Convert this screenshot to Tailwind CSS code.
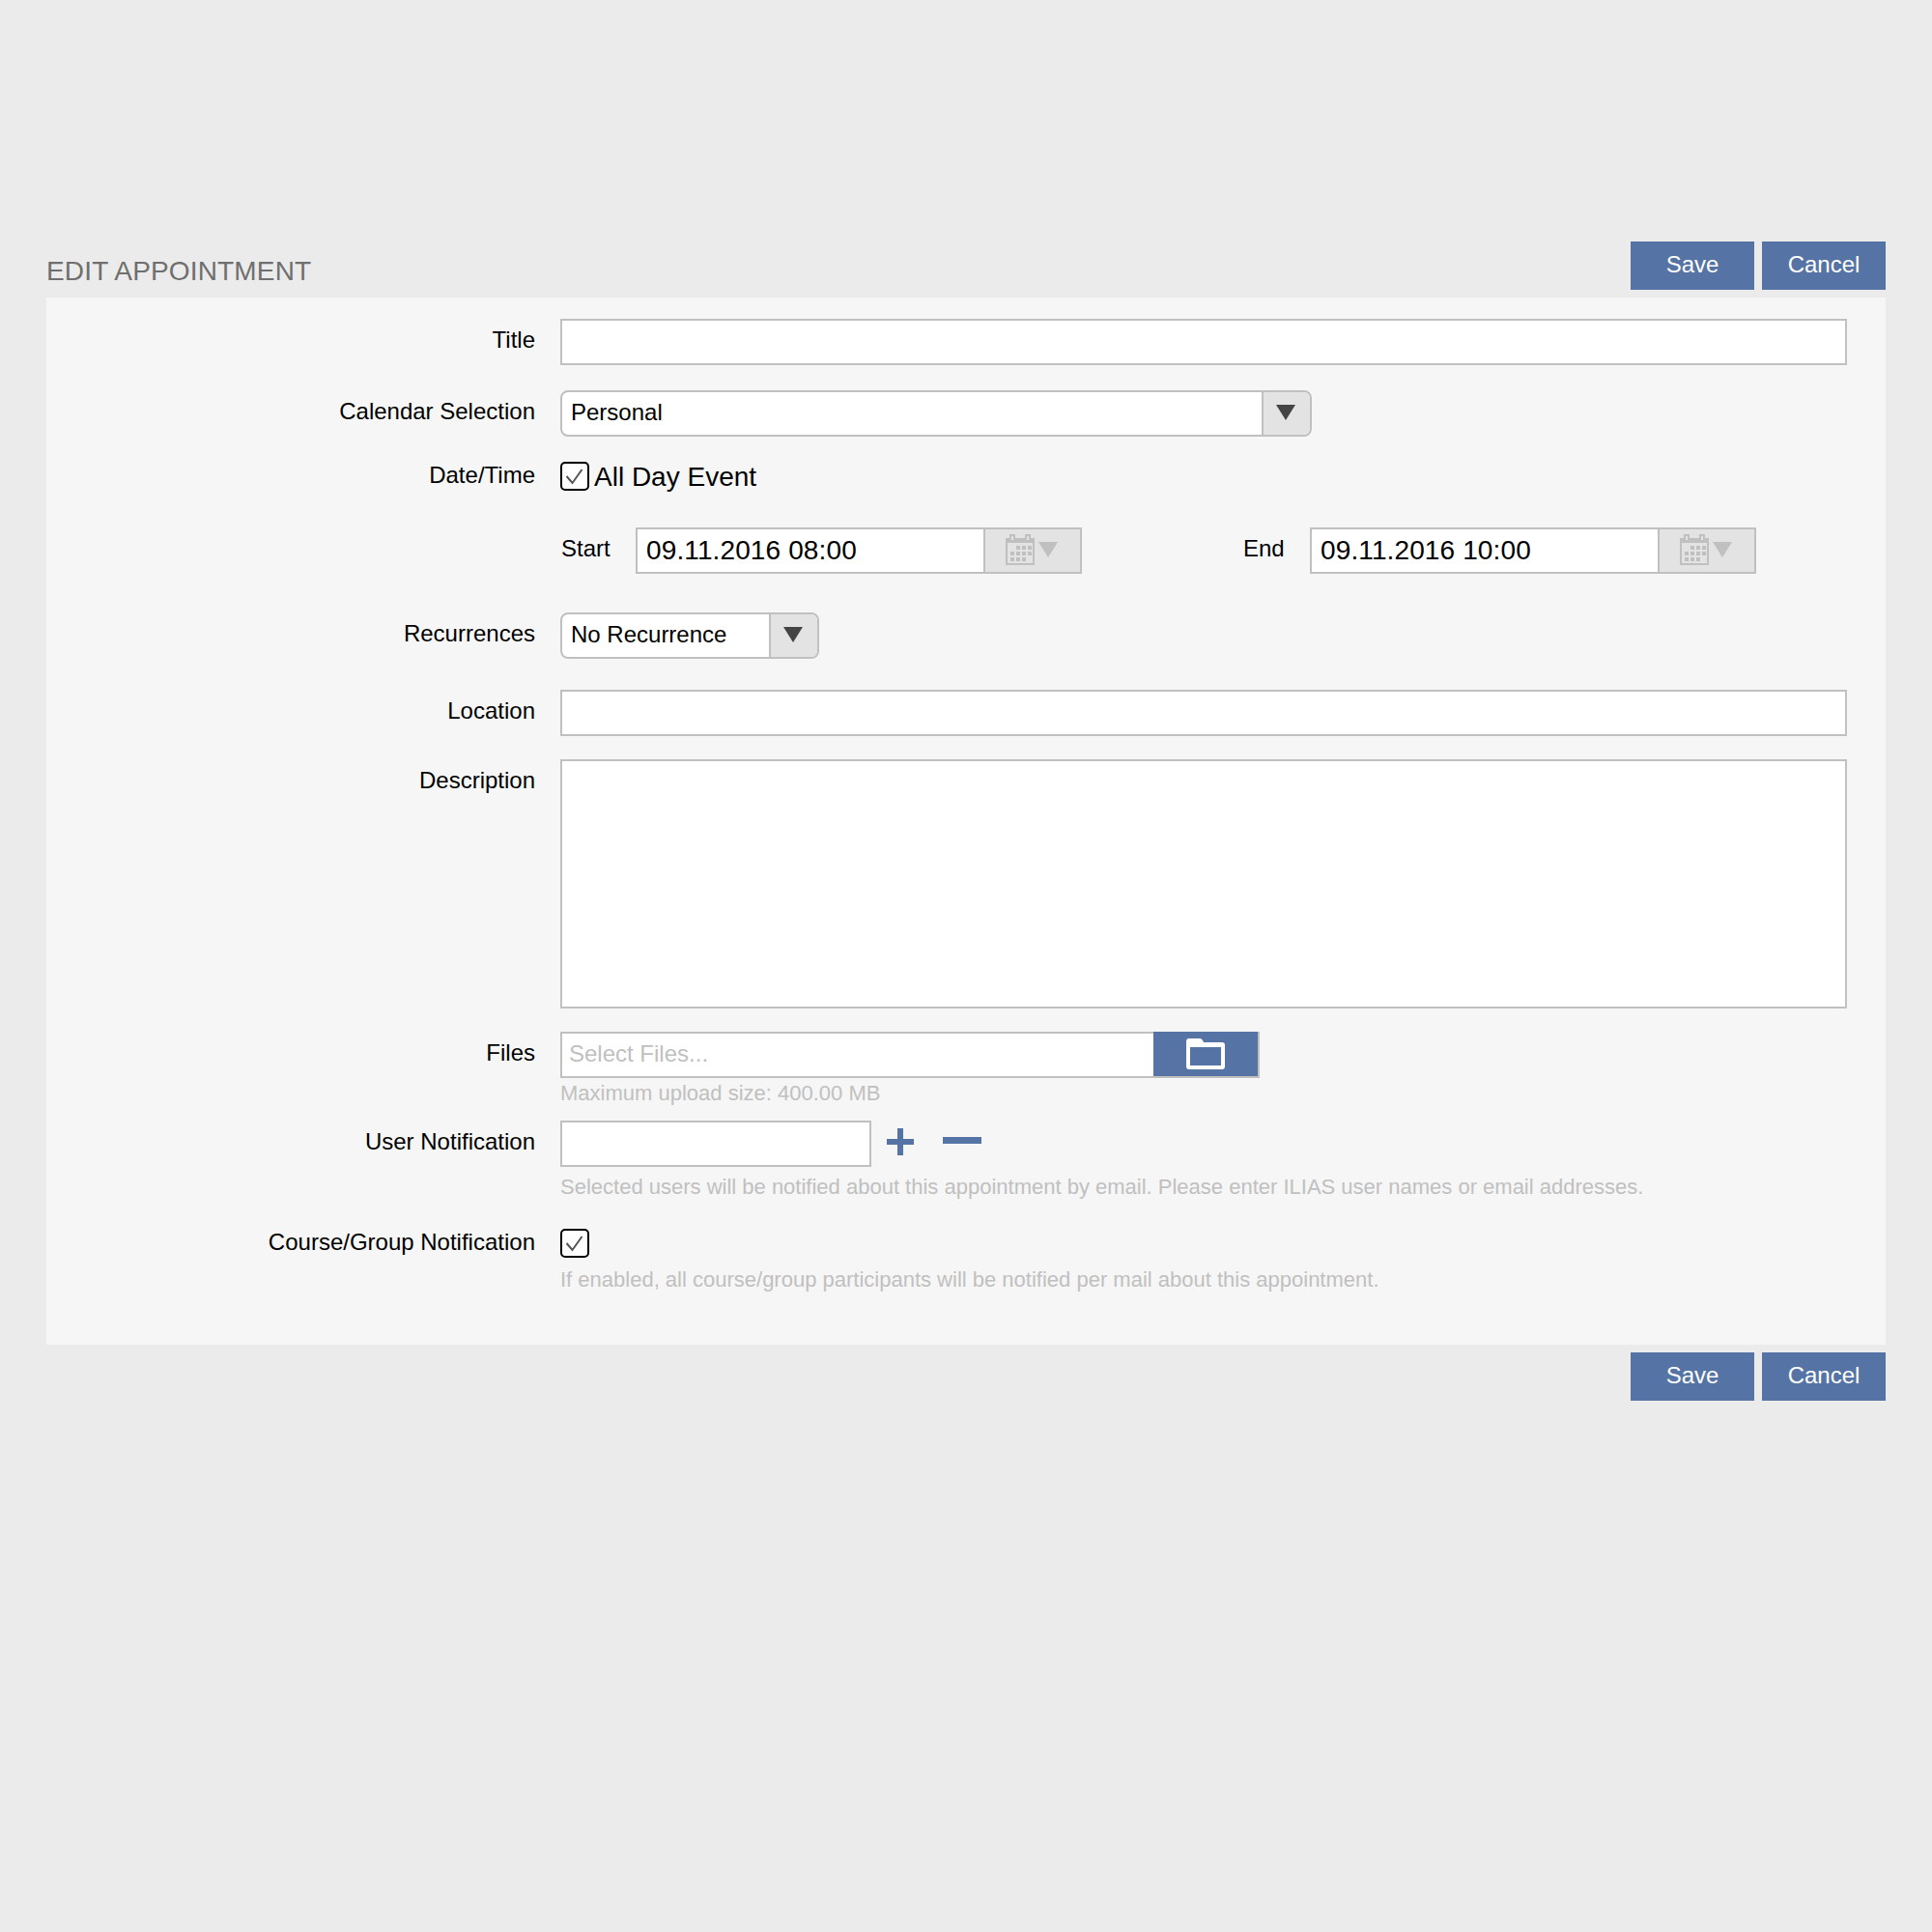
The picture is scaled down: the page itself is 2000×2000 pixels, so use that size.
<!DOCTYPE html>
<html lang="en">
<head>
    <meta charset="UTF-8">
    <title>Edit Appointment</title>
    <script src="https://cdn.jsdelivr.net/npm/@tailwindcss/browser@4"></script>
</head>
<body class="bg-[#ebebeb] font-['Liberation_Sans',Arial,sans-serif] text-black">
<div class="w-[2000px] h-[2000px] px-[48px] pt-[250px]">
    <!-- Header -->
    <div class="flex justify-between items-start h-[50px]">
        <h1 class="text-[28px] tracking-[0.16px] leading-[34px] pt-[14px] text-[#6f6f6f] font-normal">EDIT APPOINTMENT</h1>
        <div class="flex gap-2">
            <button class="w-[128px] h-[50px] bg-[#5574a5] text-white text-[24px] leading-[44px] pb-[3px]">Save</button>
            <button class="w-[128px] h-[50px] bg-[#5574a5] text-white text-[24px] leading-[44px] pb-[3px]">Cancel</button>
        </div>
    </div>

    <!-- Form -->
    <form class="mt-2 h-[1084px] bg-[#f6f6f6] pt-[22px] pr-[40px]">
        <div class="flex">
            <label class="w-[506px] text-right text-[24px] leading-[28px] pt-[8px]">Title</label>
            <input type="text" class="ml-[26px] flex-1 h-[48px] bg-white border-2 border-[#c0c0c0]">
        </div>

        <div class="flex mt-[26px]">
            <label class="w-[506px] text-right text-[24px] leading-[28px] pt-[8px]">Calendar Selection</label>
            <div class="ml-[26px] w-[778px] h-[48px] flex bg-white border-2 border-[#c0c0c0] rounded-[8px] overflow-hidden">
                <div class="flex-1 px-[9px] text-[24px] leading-[42px]">Personal</div>
                <div class="w-[50px] bg-[#e3e3e3] border-l-2 border-[#c0c0c0] flex items-center justify-center pb-[2px] pr-[2px]">
                    <svg width="20" height="16" viewBox="0 0 20 16"><path d="M0 0h20L10 16z" fill="#444"/></svg>
                </div>
            </div>
        </div>

        <div class="flex mt-[26px] h-[30px]">
            <label class="w-[506px] text-right text-[24px] leading-[28px]">Date/Time</label>
            <div class="ml-[26px] flex items-center">
                <div class="w-[30px] h-[30px] bg-white border-2 border-black rounded-[5px] flex items-center justify-center">
                    <svg width="18" height="17" viewBox="0 0 18 17"><path d="M0.5 8L6.5 15L16.5 1" fill="none" stroke="#555" stroke-width="2"/></svg>
                </div>
                <span class="ml-[5px] pt-[2px] text-[28px] leading-[32px]">All Day Event</span>
            </div>
        </div>

        <div class="flex mt-[38px] ml-[532px]">
            <span class="w-[78px] pl-[1px] text-[24px] leading-[28px] pt-[8px]">Start</span>
            <div class="w-[462px] h-[48px] flex bg-white border-2 border-[#c0c0c0]">
                <div class="flex-1 px-[9px] text-[28px] tracking-[0.12px] leading-[44px]">09.11.2016 08:00</div>
                <div class="w-[100px] bg-[#e3e3e3] border-l-2 border-[#c0c0c0] flex items-center pl-[21px] pb-[2px] gap-[4px]">
                    <svg width="30" height="32" viewBox="0 0 30 32"><path d="M4 0h6v4h10V0h6v4h4v28H0V4h4z" fill="#c0c0c0"/><path d="M6 2h2v4H6zM22 2h2v4h-2zM2 9h26v21H2z" fill="#e3e3e3"/><path d="M11 12h4v4h-4zM17 12h4v4h-4zM23 12h4v4h-4zM5 18h4v4H5zM11 18h4v4h-4zM17 18h4v4h-4zM23 18h4v4h-4zM5 24h4v4H5zM11 24h4v4h-4zM17 24h4v4h-4z" fill="#c0c0c0"/></svg>
                    <svg width="20" height="16" viewBox="0 0 20 16"><path d="M0 0h20L10 16z" fill="#c0c0c0"/></svg>
                </div>
            </div>
            <span class="w-[168px] pl-[167px] text-[24px] leading-[28px] pt-[8px] whitespace-nowrap">End</span>
            <div class="ml-[68px] w-[462px] h-[48px] flex bg-white border-2 border-[#c0c0c0]">
                <div class="flex-1 px-[9px] text-[28px] tracking-[0.12px] leading-[44px]">09.11.2016 10:00</div>
                <div class="w-[100px] bg-[#e3e3e3] border-l-2 border-[#c0c0c0] flex items-center pl-[21px] pb-[2px] gap-[4px]">
                    <svg width="30" height="32" viewBox="0 0 30 32"><path d="M4 0h6v4h10V0h6v4h4v28H0V4h4z" fill="#c0c0c0"/><path d="M6 2h2v4H6zM22 2h2v4h-2zM2 9h26v21H2z" fill="#e3e3e3"/><path d="M11 12h4v4h-4zM17 12h4v4h-4zM23 12h4v4h-4zM5 18h4v4H5zM11 18h4v4h-4zM17 18h4v4h-4zM23 18h4v4h-4zM5 24h4v4H5zM11 24h4v4h-4zM17 24h4v4h-4z" fill="#c0c0c0"/></svg>
                    <svg width="20" height="16" viewBox="0 0 20 16"><path d="M0 0h20L10 16z" fill="#c0c0c0"/></svg>
                </div>
            </div>
        </div>

        <div class="flex mt-[40px]">
            <label class="w-[506px] text-right text-[24px] leading-[28px] pt-[8px]">Recurrences</label>
            <div class="ml-[26px] w-[268px] h-[48px] flex bg-white border-2 border-[#c0c0c0] rounded-[8px] overflow-hidden">
                <div class="flex-1 px-[9px] text-[24px] leading-[42px]">No Recurrence</div>
                <div class="w-[50px] bg-[#e3e3e3] border-l-2 border-[#c0c0c0] flex items-center justify-center pb-[2px] pr-[3px]">
                    <svg width="20" height="16" viewBox="0 0 20 16"><path d="M0 0h20L10 16z" fill="#444"/></svg>
                </div>
            </div>
        </div>

        <div class="flex mt-[32px]">
            <label class="w-[506px] text-right text-[24px] leading-[28px] pt-[8px]">Location</label>
            <input type="text" class="ml-[26px] flex-1 h-[48px] bg-white border-2 border-[#c0c0c0]">
        </div>

        <div class="flex mt-[24px]">
            <label class="w-[506px] text-right text-[24px] leading-[28px] pt-[8px]">Description</label>
            <textarea class="ml-[26px] flex-1 h-[258px] bg-white border-2 border-[#c0c0c0] resize-none"></textarea>
        </div>

        <div class="flex mt-[24px]">
            <label class="w-[506px] text-right text-[24px] leading-[28px] pt-[8px]">Files</label>
            <div class="ml-[26px]">
                <div class="w-[724px] h-[48px] flex bg-white border-2 border-[#c0c0c0]">
                    <div class="flex-1 px-[7px] text-[24px] leading-[42px] text-[#c0c0c0]">Select Files...</div>
                    <div class="w-[108px] h-[46px] -mt-[2px] bg-[#5574a5] flex items-center justify-center">
                        <svg width="40" height="32" viewBox="0 0 40 32"><path d="M3 0h11q2 0 3 2l1 2h19q3 0 3 3v22q0 3-3 3H3q-3 0-3-3V3q0-3 3-3z" fill="#fff"/><path d="M4 9h32v19H4z" fill="#5574a5"/></svg>
                    </div>
                </div>
                <p class="text-[22px] leading-[26px] mt-[3px] text-[#c0c0c0]">Maximum upload size: 400.00 MB</p>
            </div>
        </div>

        <div class="flex mt-[15px]">
            <label class="w-[506px] text-right text-[24px] leading-[28px] pt-[8px]">User Notification</label>
            <div class="ml-[26px]">
                <div class="flex">
                    <input type="text" class="w-[322px] h-[48px] bg-white border-2 border-[#c0c0c0]">
                    <svg class="ml-[16px] mt-[8px]" width="28" height="28" viewBox="0 0 28 28"><path d="M11 0h6v11h11v6H17v11h-6V17H0v-6h11z" fill="#5574a5"/></svg>
                    <div class="ml-[30px] mt-[17px] w-[40px] h-[7px] bg-[#5574a5]"></div>
                </div>
                <p class="text-[22px] leading-[26px] mt-[8px] text-[#c0c0c0]">Selected users will be notified about this appointment by email. Please enter ILIAS user names or email addresses.</p>
            </div>
        </div>

        <div class="flex mt-[30px]">
            <label class="w-[506px] text-right text-[24px] leading-[28px]">Course/Group Notification</label>
            <div class="ml-[26px]">
                <div class="w-[30px] h-[30px] bg-white border-2 border-black rounded-[5px] flex items-center justify-center">
                    <svg width="18" height="17" viewBox="0 0 18 17"><path d="M0.5 8L6.5 15L16.5 1" fill="none" stroke="#555" stroke-width="2"/></svg>
                </div>
                <p class="text-[22px] leading-[26px] mt-[10px] text-[#c0c0c0]">If enabled, all course/group participants will be notified per mail about this appointment.</p>
            </div>
        </div>
    </form>

    <!-- Footer buttons -->
    <div class="flex justify-end gap-2 mt-2">
        <button class="w-[128px] h-[50px] bg-[#5574a5] text-white text-[24px] leading-[44px] pb-[3px]">Save</button>
        <button class="w-[128px] h-[50px] bg-[#5574a5] text-white text-[24px] leading-[44px] pb-[3px]">Cancel</button>
    </div>
</div>
</body>
</html>
